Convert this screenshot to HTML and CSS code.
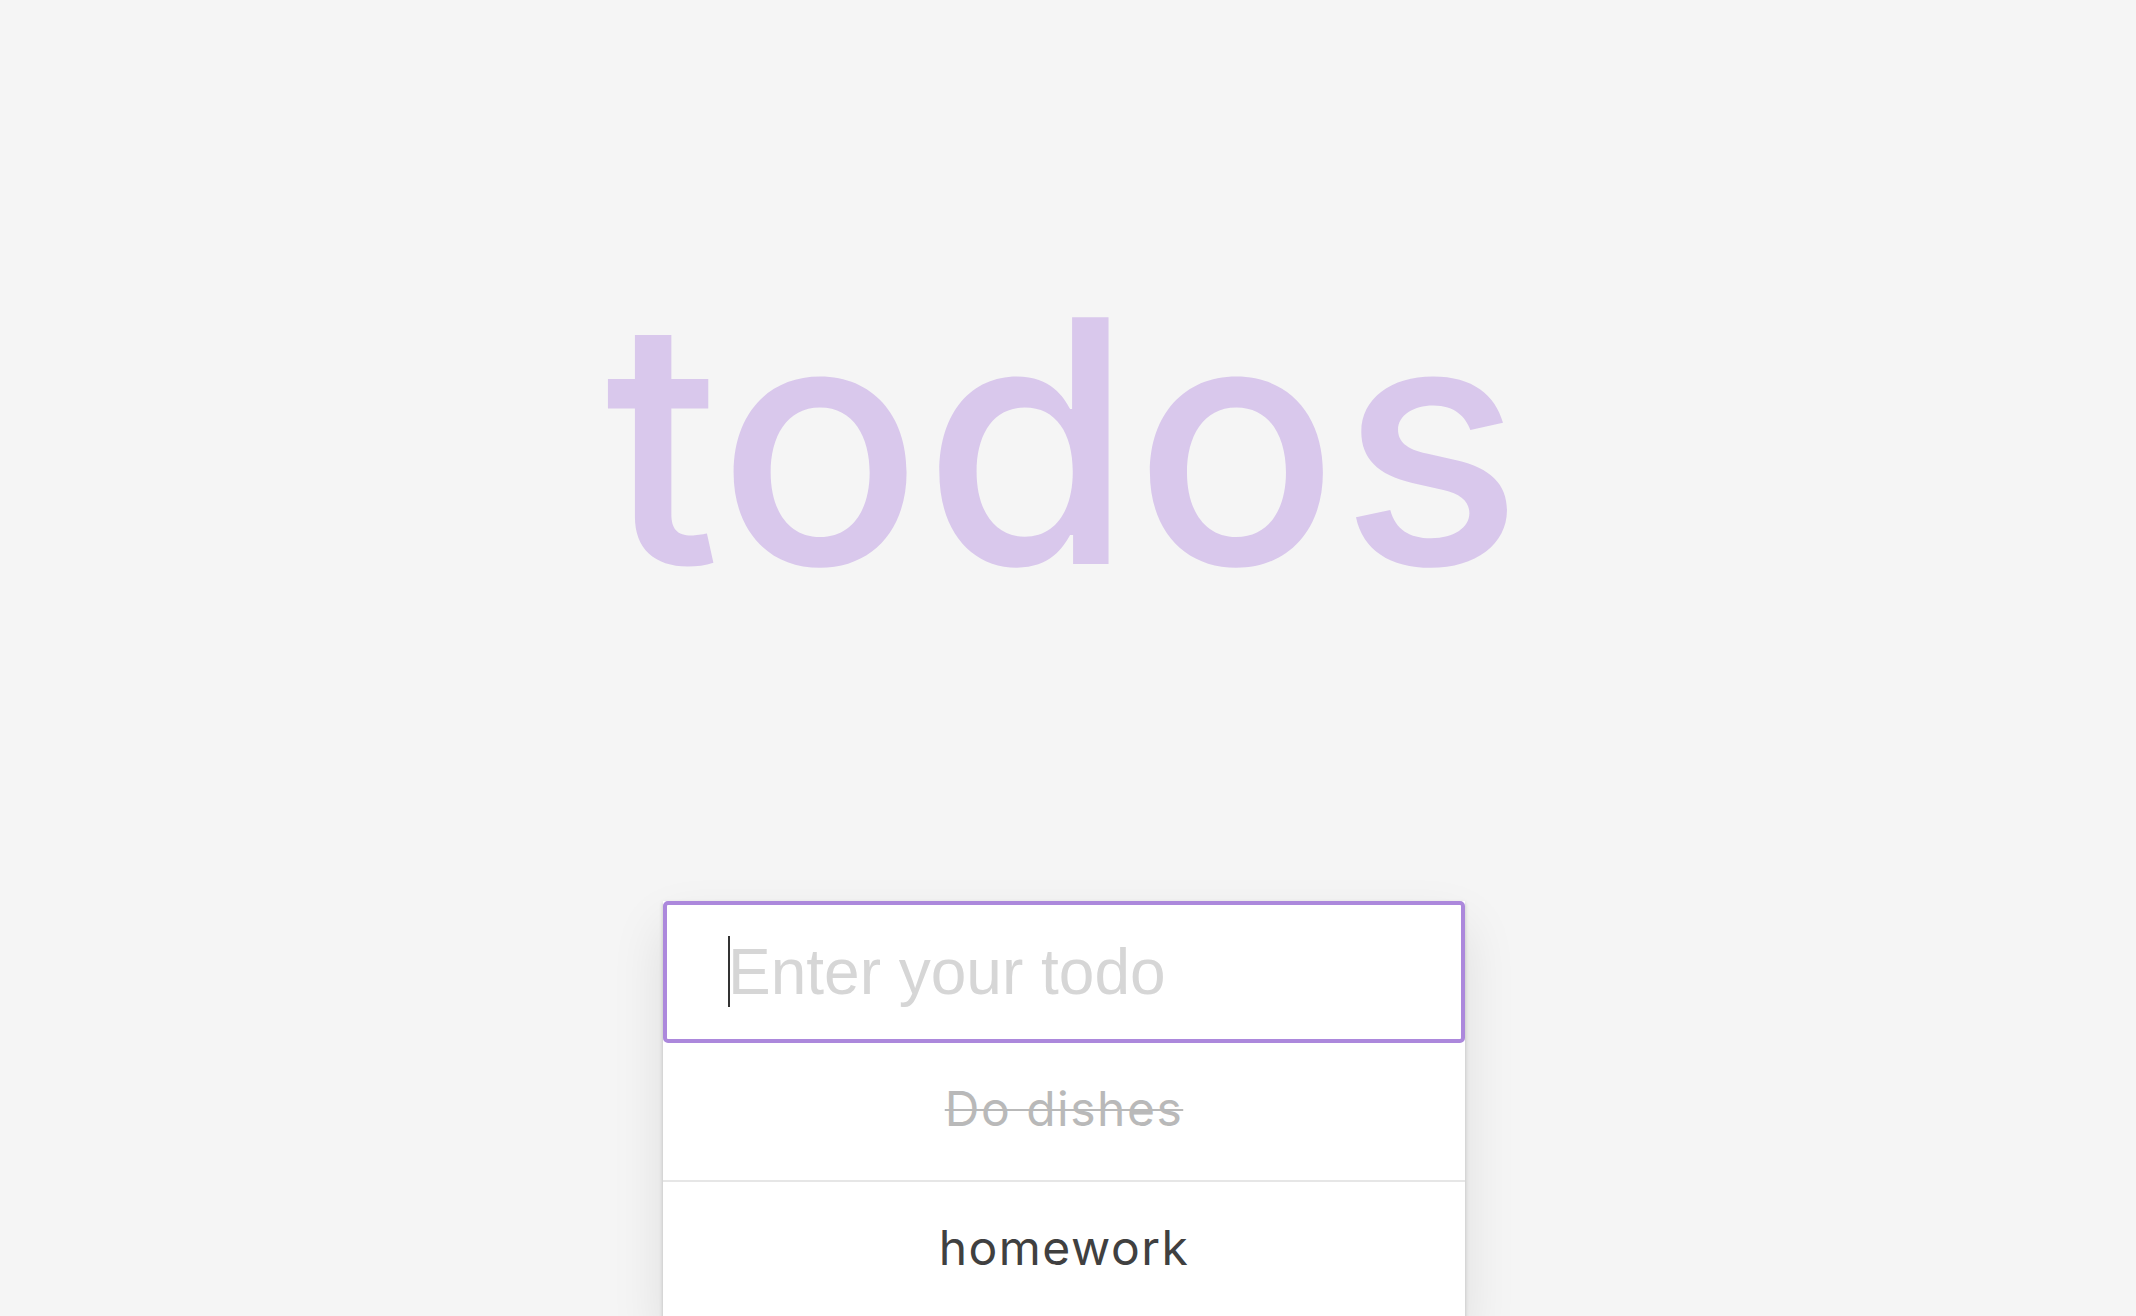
FILE: index.html
```html
<!DOCTYPE html>
<html lang="en">
<head>
<meta charset="utf-8">
<title>todos</title>
<link rel="stylesheet" href="styles.css">
</head>
<body>
<main class="app">
  <h1 class="title">todos</h1>
  <section class="panel">
    <div class="entry">
      <input class="entry-input" type="text" placeholder="Enter your todo">
      <span class="caret"></span>
    </div>
    <ul class="list">
      <li class="item done">Do dishes</li>
      <li class="item">homework</li>
    </ul>
  </section>
</main>
</body>
</html>
```
FILE: styles.css
```css
html, body {
  margin: 0;
  padding: 0;
  background: #f5f5f5;
  height: 100%;
  overflow: hidden;
}
body {
  padding-right: 8px;
  font-family: Inter, "Noto Sans", sans-serif;
}
.app {
  display: flex;
  flex-direction: column;
  align-items: center;
  padding-top: 272px;
}
.title {
  margin: 0;
  font-family: Inter, sans-serif;
  font-weight: 500;
  font-size: 339px;
  line-height: 339px;
  color: #d9c8ec;
  letter-spacing: 1px;
}
.panel {
  margin-top: 290px;
  width: 802px;
  background: #fff;
  box-shadow: 0 2px 4px 0 rgba(0,0,0,0.2), 0 25px 50px 0 rgba(0,0,0,0.1);
}
.entry {
  position: relative;
}
.entry-input {
  display: block;
  box-sizing: border-box;
  width: 100%;
  height: 142px;
  margin: 0;
  padding: 0 0 0 61px;
  border: 4px solid #ac88dc;
  border-radius: 5px;
  outline: none;
  background: #fff;
  font-family: "Liberation Sans", Arial, sans-serif;
  font-size: 64px;
  color: #444;
  caret-color: transparent;
}
.entry-input::placeholder {
  color: #d6d6d6;
}
.caret {
  position: absolute;
  left: 65px;
  top: 35px;
  width: 2px;
  height: 71px;
  background: #333;
}
.list {
  list-style: none;
  margin: 0;
  padding: 0;
}
.item {
  box-sizing: border-box;
  height: 137px;
  padding-top: 37px;
  line-height: 57px;
  text-align: center;
  font-family: Inter, sans-serif;
  font-size: 48px;
  color: #404040;
  letter-spacing: 1.5px;
}
.item + .item {
  border-top: 2px solid #e6e6e6;
  height: 139px;
}
.item.done {
  color: #b9b9b9;
  text-decoration: line-through;
  text-decoration-thickness: 2px;
}
```
